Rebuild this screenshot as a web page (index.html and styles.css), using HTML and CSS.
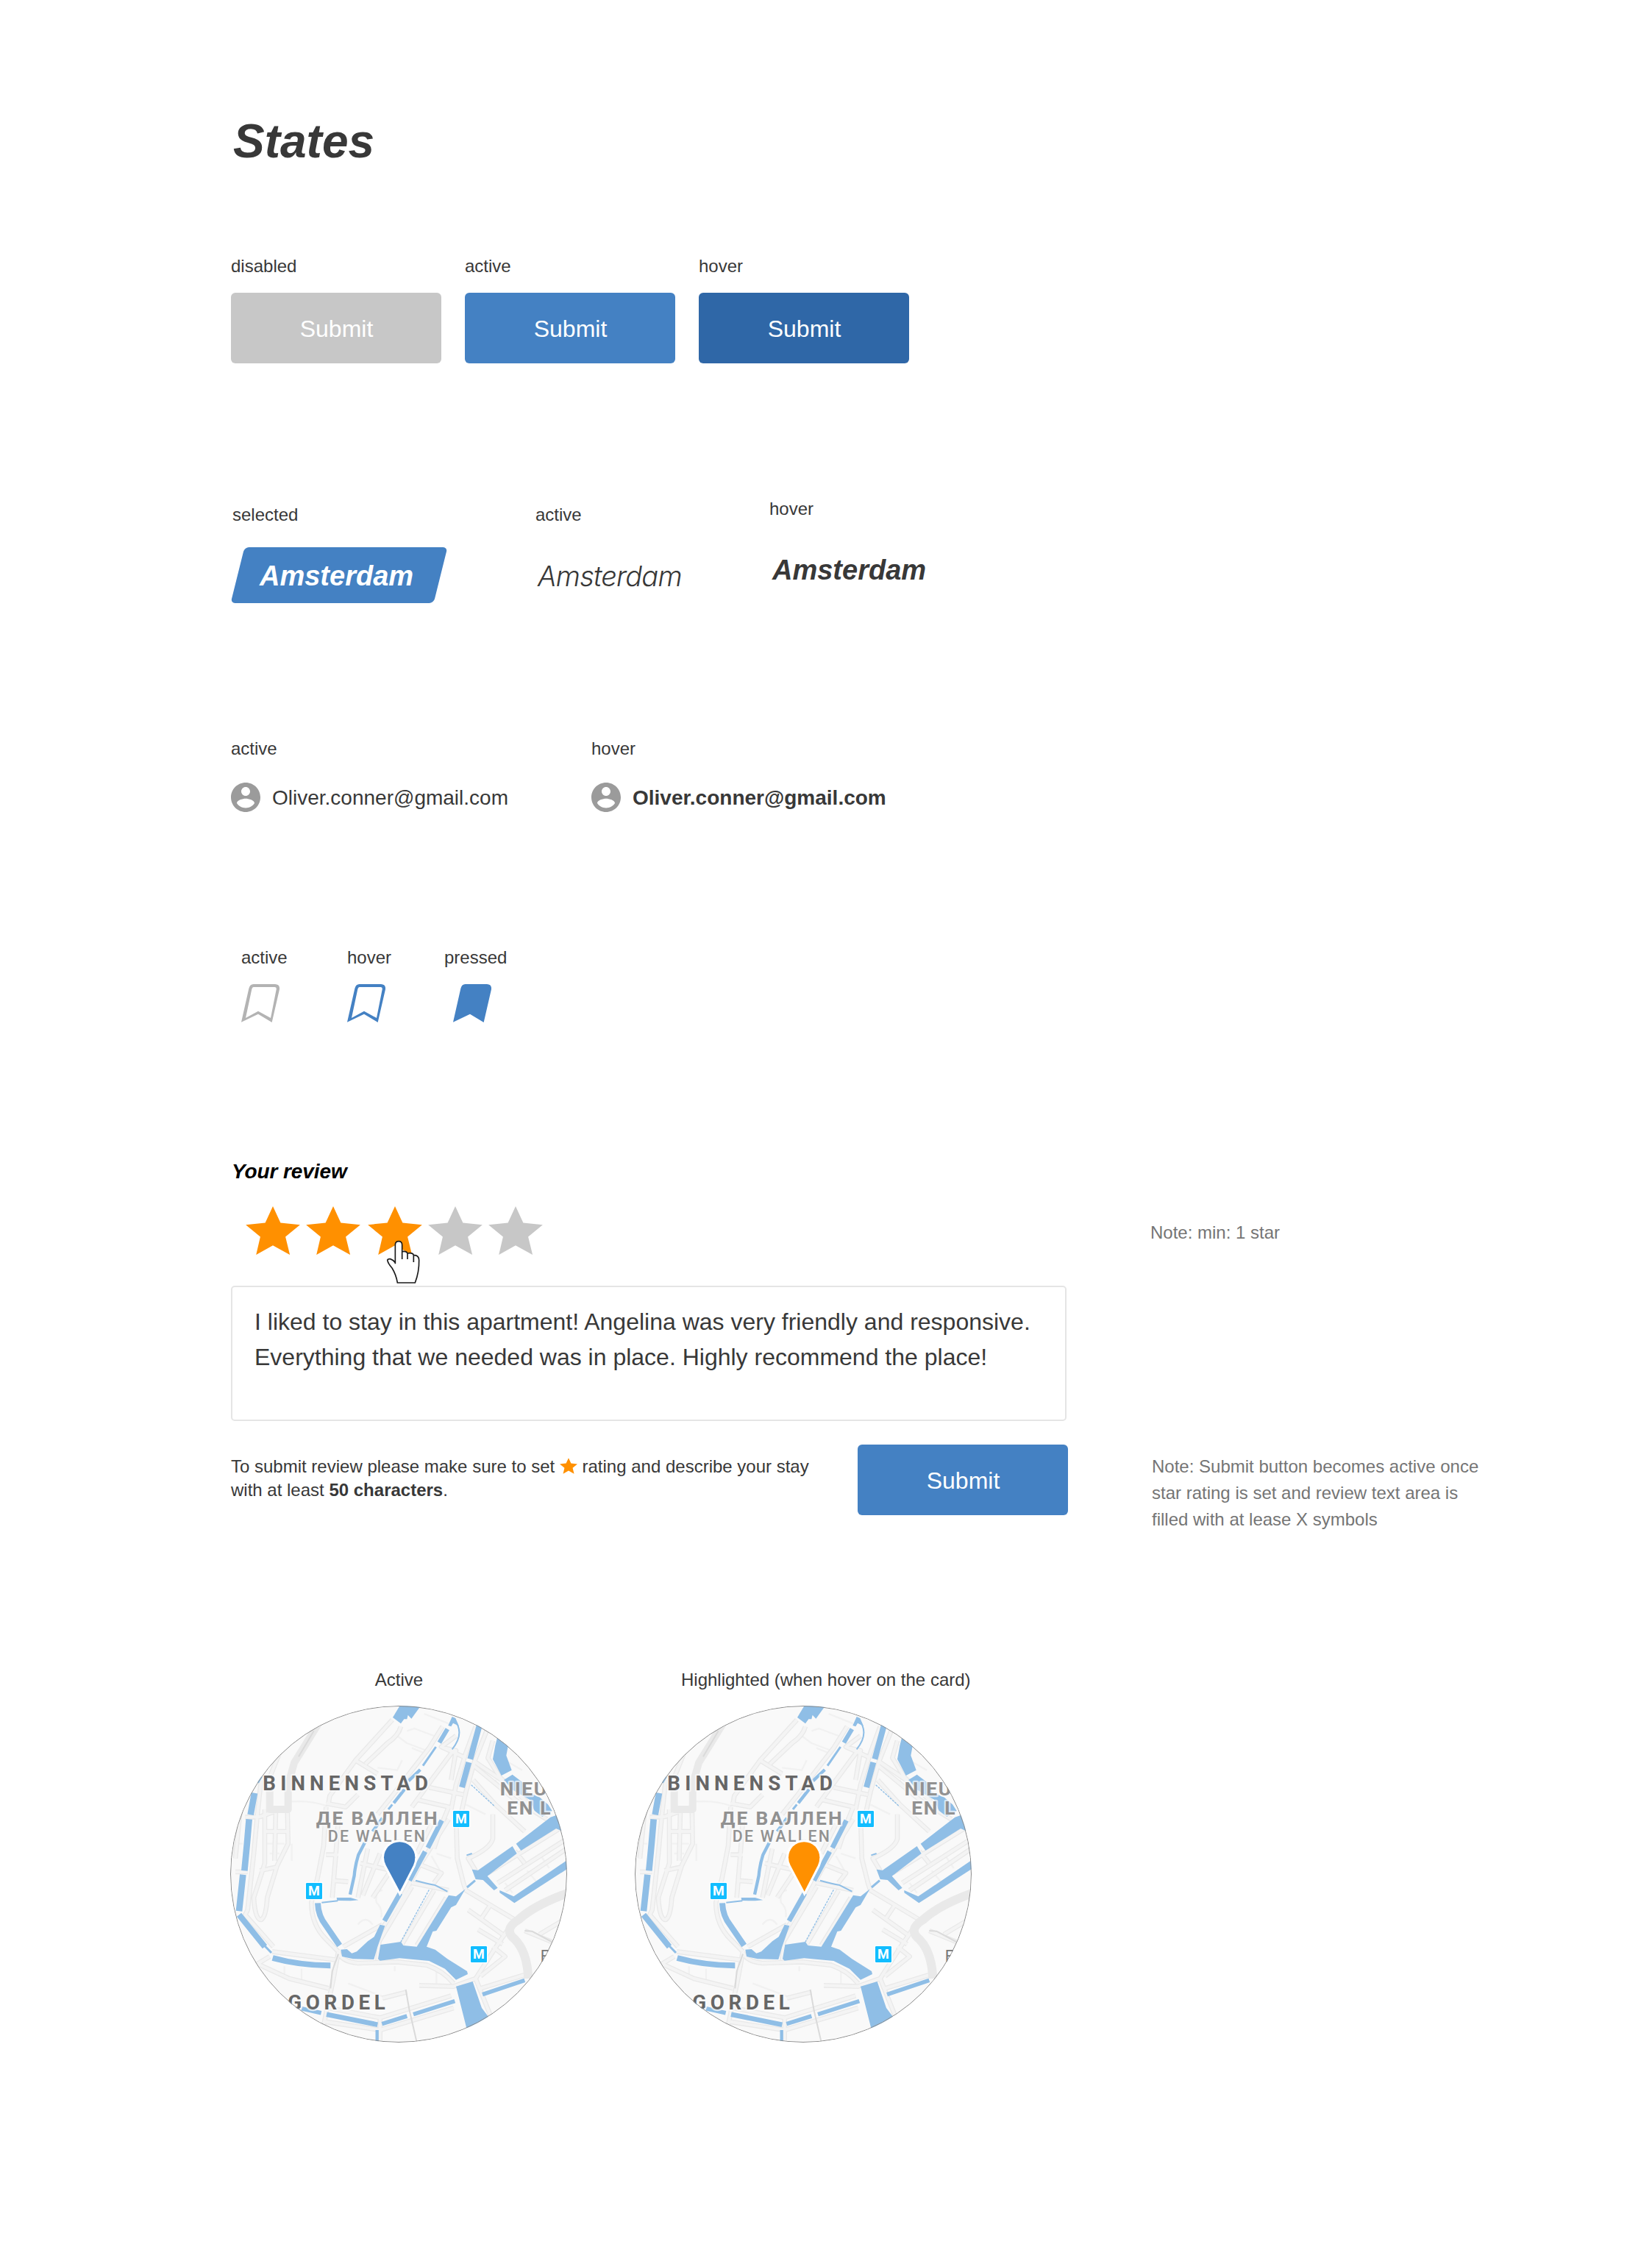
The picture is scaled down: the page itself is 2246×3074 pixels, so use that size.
FILE: index.html
```html
<!DOCTYPE html>
<html lang="en">
<head>
<meta charset="utf-8">
<title>States</title>
<link rel="stylesheet" href="styles.css">
</head>
<body>
<svg class="defs" aria-hidden="true">
  <defs>
    <symbol id="star" viewBox="0 0 220 197"><path d="M110 0L141 67L220 75L161 124L179 197L110 159L42 197L59 124L0 75L79 67Z"/></symbol>
    <symbol id="user" viewBox="2 2 20 20"><path d="M12 2C6.48 2 2 6.48 2 12s4.48 10 10 10 10-4.48 10-10S17.52 2 12 2zm0 3c1.66 0 3 1.34 3 3s-1.34 3-3 3-3-1.34-3-3 1.34-3 3-3zm0 14.2c-2.5 0-4.71-1.28-6-3.22.03-1.99 4-3.08 6-3.08 1.99 0 5.97 1.09 6 3.08-1.29 1.94-3.5 3.22-6 3.22z"/></symbol>
    <symbol id="bookmark" viewBox="0 0 156 156"><path fill-rule="evenodd" d="M0 155L31 18Q35 0 50 0H138Q158 1 156 21L125 156L69 122ZM18 138L43 20Q45 12 50 12H136Q145 12 143 22L120 138L69 110Z"/></symbol>
    <symbol id="bookmark-full" viewBox="0 0 156 156"><path d="M0 155L31 18Q35 0 50 0H138Q158 1 156 21L125 156L69 122Z"/></symbol>
    <g id="streets">
      <path d="M700 235L550 400L445 545L440 575M735 262Q725 300 680 330L590 415M550 400L640 455M905 262L850 350L780 440L700 545L640 620M960 300L900 345L1000 390M945 365L860 480L780 590M915 350L960 360L940 480M1040 262L1000 370L960 500L940 600M1085 280L1035 405L1000 530L980 620M1035 405L1160 490L1210 540M1110 320L1090 390L1140 470L1250 570M1030 420L1200 560L1330 640M1030 480L1120 580L1240 690"/>
      <path d="M430 575L510 590L560 540M430 590L420 750L395 880L370 980Q370 1070 430 1130L480 1180M480 640L470 780L455 960M430 785H480M455 890L520 895M650 780L580 950M700 840L620 960M600 760L560 960M800 560L930 590L910 640L870 760M850 510L990 540M930 640L810 830L740 960L650 1100L640 1215M860 660L800 780M780 900L930 930M740 1150L870 930M640 1150L780 915M800 1155L920 960M500 1160L660 1070M570 820L700 850M800 820L900 860L870 900"/>
      <path d="M960 620L965 800L990 900L1000 930L1200 1050M1110 620L1110 720Q1100 760 1010 800L1040 850M1090 860L1412 660M1130 900L1412 720M1160 930L1412 760M1200 770L1240 820M480 1180Q490 1220 560 1227L720 1222L840 1235Q910 1260 950 1310M480 1180L460 1290L420 1480M210 1180L480 1215M200 1200L150 1230L280 1290L440 1330M810 1318L950 1322L1040 1290L1130 1150L1200 1050M1040 1290L1100 1440M1060 1330L1240 1275M1110 1160L1160 1200L1060 1280"/>
      <path d="M660 1370L760 1345M650 1450L940 1360M440 1410L650 1450L650 1550M420 1465L650 1500L950 1410M165 480L150 620L135 780L110 1010L100 1030L215 1160M60 855L110 855M80 600L60 800M100 632L160 630L275 590M180 600L180 820L135 960Q140 1050 165 1050Q185 1040 190 960L230 830L275 740L270 480M180 690L270 690M160 850L230 835M225 600L220 810M240 370L200 470M1010 1010L1150 1110M1100 990L1060 1050M1240 1095L1350 1140M1300 1110L1400 1050M1050 1090L1150 1150"/>
    </g>
    <g id="map">
      <rect class="land" x="39" y="177" width="1374" height="1374"/>
      <path class="lane" d="M760 280L790 270L870 300M830 210L930 250M720 300L760 330L840 360M640 430L720 440L740 400M780 350L830 370M1000 580L1080 620M880 780L940 800M860 790L900 860M660 930Q630 930 635 980Q660 1000 655 1040M560 1070Q590 1030 620 1070M260 1240V1290M330 1250V1300M520 1310L680 1370M880 1250V1310M710 1240V1260M1160 900L1190 940M1250 850L1300 910M1300 780L1340 840M1120 480L1150 540M1160 400L1230 440M270 570Q360 560 430 585L430 620M60 740H90M290 740L290 810M190 740H260M200 780H240"/>
      <use class="street-edge" href="#streets"/>
      <use class="street-fill" href="#streets"/>
      <path class="road" d="M408 235Q350 330 300 410L275 500V600L200 600V520"/>
      <path class="road road-wide" d="M1420 940Q1280 990 1215 1050Q1150 1090 1200 1130Q1250 1180 1255 1290"/>
      <path class="track" d="M380 280L318 385M755 1335L770 1420L800 1550M480 1190L455 1260L448 1330M1240 1095L1270 1097L1350 1140"/>
      <g class="water">
        <path d="M735 170L816 178L778 230L764 215L760 232L748 232L735 250L702 225ZM944 222L958 228L972 260L948 248L940 262L928 258Z"/>
        <path d="M1128 308L1172 343L1165 380L1187 440L1145 462L1110 395L1120 340ZM1155 480L1190 458L1245 500L1250 530L1300 550L1335 580L1352 606L1312 630L1280 605L1260 560L1190 520Z"/>
        <path d="M1205 740L1345 632L1375 622L1395 690L1368 678L1225 768ZM1025 845L1050 848L1190 750L1208 780L1088 872L1130 920L1115 930L1070 888L1040 885ZM1138 930L1195 955L1415 806V842L1198 982L1138 940Z"/>
        <path d="M650 1070L670 1075L640 1160L625 1212L540 1210L495 1200L490 1172L515 1170L535 1187L555 1180L600 1138L626 1120ZM473 960L530 960L562 970L530 973L475 972Z"/>
        <path d="M652 1152L735 1140L745 1155L800 1160L930 950L960 955L998 925L960 990L940 1000L880 1095L865 1098L840 1160L875 1172L925 1210L1005 1260L1008 1272L960 1295L915 1250L850 1218L730 1207L650 1217L642 1210Z"/>
        <path d="M960 1322L1028 1302L1065 1410L1095 1450L1010 1520Z"/>
      </g>
      <g class="canal">
        <path stroke-width="6" d="M952 232Q998 290 944 355M1003 787L1025 780M412 980L478 973M795 890Q850 905 872 908L925 935"/>
        <path stroke-width="18" d="M925 272L892 328"/>
        <path stroke-width="9" d="M878 345L825 422M700 580L684 600M1038 890L1005 918M175 1152L207 1185"/>
        <path stroke-width="13" d="M814 438L766 484M750 518L706 574M660 635L620 690M588 735L562 785Q548 830 545 870L528 947M638 1500V1555M165 465L150 490"/>
        <path stroke-width="24" d="M1056 255L1018 395M1012 408L984 510M396 982Q398 1035 430 1075L485 1155M212 1206Q320 1236 448 1237M75 1030L180 1160"/>
        <path stroke-width="20" d="M902 645L845 757M834 772L770 890M732 942L668 1055M432 1436L640 1478"/>
        <path stroke-width="17" d="M1068 1355L1240 1297M786 1436L955 1382M658 1475L760 1443M330 1412L410 1430"/>
        <path stroke-width="26" d="M91 866L75 1015M116 640Q108 740 97 850M138 533L122 622"/>
        <path class="dashed" stroke-width="4" d="M850 928L735 1140M1022 500L1115 585"/>
      </g>
    </g>
    <g id="metro">
      <rect x="-4" y="-4" width="74" height="74" rx="6" fill="#fff"/>
      <rect width="66" height="66" rx="4" fill="#12bdff"/>
    </g>
    <path id="pin" d="M731 935L674 828Q666 812 666 796A63.500 63.500 0 0 1 793 796Q793 812 786 828Z"/>
  </defs>
</svg>

<main class="page">
  <h1 class="title">States</h1>

  <section class="row buttons">
    <div class="state"><p class="label">disabled</p><button class="btn btn-disabled">Submit</button></div>
    <div class="state"><p class="label">active</p><button class="btn">Submit</button></div>
    <div class="state"><p class="label">hover</p><button class="btn btn-hover">Submit</button></div>
  </section>

  <section class="row tabs">
    <div class="state state-selected"><p class="label">selected</p><span class="tab tab-selected">Amsterdam</span></div>
    <div class="state state-link"><p class="label">active</p><span class="tab tab-light">Amsterdam</span></div>
    <div class="state state-hover"><p class="label">hover</p><span class="tab">Amsterdam</span></div>
  </section>

  <section class="row users">
    <div class="state"><p class="label">active</p><div class="user"><svg class="avatar"><use href="#user"/></svg><span>Oliver.conner@gmail.com</span></div></div>
    <div class="state"><p class="label">hover</p><div class="user user-hover"><svg class="avatar"><use href="#user"/></svg><span>Oliver.conner@gmail.com</span></div></div>
  </section>

  <section class="row bookmarks">
    <div class="state"><p class="label">active</p><svg class="bookmark"><use href="#bookmark"/></svg></div>
    <div class="state"><p class="label">hover</p><svg class="bookmark bookmark-blue"><use href="#bookmark"/></svg></div>
    <div class="state state-pressed"><p class="label">pressed</p><svg class="bookmark bookmark-blue"><use href="#bookmark-full"/></svg></div>
  </section>

  <section class="review">
    <h2 class="review-title">Your review</h2>
    <div class="stars">
      <svg class="star"><use href="#star"/></svg>
      <svg class="star"><use href="#star"/></svg>
      <span class="star-hover">
        <svg class="star"><use href="#star"/></svg>
        <svg class="cursor" viewBox="675 378 140 178"><path d="M712 475V398Q712 383 726 383Q740 383 740 398V425Q758 421 762 432Q783 428 787 439Q809 439 809 460Q810 508 793 552H721Q716 520 699 492Q682 474 680 459Q682 454 692 455Q704 459 712 470M740 420V456M762 430V456M787 437V468"/></svg>
      </span>
      <svg class="star star-off"><use href="#star"/></svg>
      <svg class="star star-off"><use href="#star"/></svg>
    </div>
    <p class="note note-stars">Note: min: 1 star</p>
    <div class="textarea">I liked to stay in this apartment! Angelina was very friendly and responsive.<br>Everything that we needed was in place. Highly recommend the place!</div>
    <div class="review-foot">
      <p class="help">To submit review please make sure to set <svg class="star-inline"><use href="#star"/></svg> rating and describe your stay<br>with at least <b>50 characters</b>.</p>
      <button class="btn">Submit</button>
    </div>
    <p class="note note-submit">Note: Submit button becomes active once<br>star rating is set and review text area is<br>filled with at lease X symbols</p>
  </section>

  <section class="row maps">
    <figure class="map-state">
      <figcaption class="label">Active</figcaption>
      <svg class="map" viewBox="39 177 1374 1374">
        <use href="#map"/>
        <g class="place">
          <text class="district" x="172" y="521" textLength="674">BINNENSTAD</text>
          <text class="district" x="274" y="1415" textLength="397">GORDEL</text>
          <text class="area" x="389" y="664" textLength="500">ДЕ ВАЛЛЕН</text>
          <text class="area area-small" x="437" y="731" textLength="402">DE WALLEN</text>
          <text class="area" x="1139" y="543">NIEU</text>
          <text class="area" x="1168" y="622">EN L</text>
          <text class="area area-small area-thin" x="1304" y="1222">F</text>
        </g>
        <g class="metro" transform="translate(948 606)"><use href="#metro"/><text x="33" y="51">M</text></g>
        <g class="metro" transform="translate(348 900)"><use href="#metro"/><text x="33" y="51">M</text></g>
        <g class="metro" transform="translate(1020 1158)"><use href="#metro"/><text x="33" y="51">M</text></g>
        <use class="pin" href="#pin"/>
        <circle class="ring" cx="726" cy="864" r="685.500"/>
      </svg>
    </figure>
    <figure class="map-state">
      <figcaption class="label label-long">Highlighted (when hover on the card)</figcaption>
      <svg class="map" viewBox="39 177 1374 1374">
        <use href="#map"/>
        <g class="place">
          <text class="district" x="172" y="521" textLength="674">BINNENSTAD</text>
          <text class="district" x="274" y="1415" textLength="397">GORDEL</text>
          <text class="area" x="389" y="664" textLength="500">ДЕ ВАЛЛЕН</text>
          <text class="area area-small" x="437" y="731" textLength="402">DE WALLEN</text>
          <text class="area" x="1139" y="543">NIEU</text>
          <text class="area" x="1168" y="622">EN L</text>
          <text class="area area-small area-thin" x="1304" y="1222">F</text>
        </g>
        <g class="metro" transform="translate(948 606)"><use href="#metro"/><text x="33" y="51">M</text></g>
        <g class="metro" transform="translate(348 900)"><use href="#metro"/><text x="33" y="51">M</text></g>
        <g class="metro" transform="translate(1020 1158)"><use href="#metro"/><text x="33" y="51">M</text></g>
        <use class="pin pin-on" href="#pin"/>
        <circle class="ring" cx="726" cy="864" r="685.500"/>
      </svg>
    </figure>
  </section>
</main>
</body>
</html>
```
FILE: styles.css
```css
* { box-sizing: border-box; }
body { margin: 0; background: #fff; color: #383838; font-family: "Liberation Sans", Arial, sans-serif; }
h1, h2, p, figure { margin: 0; }
svg { display: block; }
.defs { position: absolute; width: 0; height: 0; }

.page { min-height: 3074px; padding: 156px 0 0 314px; }
.title { padding-left: 3px; font-size: 64px; line-height: 72px; font-style: italic; font-weight: 700; }
.row { display: flex; align-items: flex-start; }
.label { font-size: 24px; line-height: 28px; white-space: nowrap; }

/* buttons */
.buttons { margin-top: 120px; gap: 32px; }
.btn { display: block; width: 286px; height: 96px; margin: 0; padding: 2px 0 0 1px; border: 0; border-radius: 6px; background: #4481c3; color: #fff; font: 32px/94px "Liberation Sans", Arial, sans-serif; text-align: center; }
.buttons .btn { margin-top: 22px; }
.btn-disabled { background: #c7c7c7; }
.btn-hover { background: #2f67a7; }

/* city tabs */
.tabs { margin-top: 184px; }
.state-selected, .state-link { padding-top: 8px; }
.state-selected { width: 414px; }
.state-selected .label { padding-left: 2px; }
.state-link { width: 318px; }
.tab { display: block; position: relative; z-index: 0; margin-top: 30px; padding-top: 1px; padding-left: 4px; height: 76px; font-size: 38px; line-height: 76px; font-style: italic; font-weight: 700; }
.tab-selected { width: 294px; padding-left: 39px; color: #fff; }
.tab-selected::before { content: ""; position: absolute; z-index: -1; inset: 0 9px; border-radius: 6px; background: #4481c3; transform: skewX(-14deg); }
.tab-light { padding-left: 3px; font-family: Inter, "Liberation Sans", sans-serif; font-weight: 300; letter-spacing: -.8px; }

/* account link */
.users { margin-top: 184px; }
.users .state { width: 490px; }
.user { display: flex; align-items: center; gap: 16px; height: 40px; margin-top: 32px; font-size: 28px; line-height: 38px; }
.user span { padding-top: 2px; }
.user-hover { font-weight: 700; }
.avatar { width: 40px; height: 40px; fill: #9b9b9b; }

/* bookmarks */
.bookmarks { margin-top: 184px; padding-left: 14px; }
.bookmarks .state { width: 144px; }
.bookmark { width: 52px; height: 52px; margin-top: 22px; fill: #b3b3b3; }
.bookmark-blue { fill: #4481c3; }
.state-pressed .label { margin-left: -12px; }

/* review form */
.review { display: grid; grid-template-columns: 1138px 474px; column-gap: 112px; margin-top: 187px; }
.review-title { grid-column: 1 / -1; padding-left: 1px; color: #000; font-size: 28px; line-height: 32px; font-style: italic; font-weight: 700; letter-spacing: -.1px; }
.stars { display: flex; gap: 8px; height: 66px; margin: 31px 0 42px; padding-left: 20px; }
.star { flex: none; width: 74px; height: 66px; fill: #ff9000; }
.star-off { fill: #c7c7c7; }
.star-hover { position: relative; margin-left: 2px; }
.cursor { position: absolute; left: 25px; top: 46px; width: 46.700px; height: 59.300px; fill: #fff; stroke: #1a1a1a; stroke-width: 5; }
.note { color: #757575; font-size: 24px; line-height: 36px; }
.note-stars { margin-top: 49px; }
.textarea { grid-column: 1; width: 1136px; height: 184px; padding: 23px 30px; border: 2px solid #e5e5e5; border-radius: 5px; font-size: 32px; line-height: 48px; white-space: nowrap; }
.review-foot { grid-column: 1; display: flex; justify-content: space-between; margin-top: 32px; }
.help { padding-top: 14px; font-size: 24px; line-height: 32px; white-space: nowrap; }
.star-inline { display: inline-block; width: 24px; height: 22px; vertical-align: -2px; fill: #ff9000; }
.note-submit { margin: 44px 0 0 2px; white-space: nowrap; }

/* maps */
.maps { margin-top: 186px; margin-left: -1px; gap: 92px; }
.map-state { width: 458px; }
.map-state .label { padding-left: 1px; text-align: center; }
.map-state .label-long { padding-left: 63px; text-align: left; }
.map { width: 458px; height: 458px; margin-top: 21px; border-radius: 50%; overflow: hidden; }
.land { fill: #f9f9f9; }
.lane, .street-edge, .street-fill, .road, .track, .canal { fill: none; stroke-linejoin: round; }
.lane { stroke: #f1f1f1; stroke-width: 7; }
.street-edge { stroke: #e9e9e9; stroke-width: 20; }
.street-fill { stroke: #f4f4f4; stroke-width: 12; }
.road { stroke: #e9e9e9; stroke-width: 30; }
.road-wide { stroke-width: 36; }
.track { stroke: #dadada; stroke-width: 6; }
.water { fill: #8fbee6; }
.canal { stroke: #8fbee6; }
.dashed { stroke-dasharray: 9 4; }
.place text { font-family: Roboto, sans-serif; stroke: #f9f9f9; stroke-opacity: .7; stroke-width: 14; stroke-linejoin: round; paint-order: stroke; }
.place .district { fill: #666; font-size: 83px; font-weight: 700; }
.place .area { fill: #919191; font-size: 79px; font-weight: 700; letter-spacing: 5px; }
.place .area-small { font-size: 64px; font-weight: 500; }
.place .area-thin { font-weight: 400; fill: #777; }
.metro text { fill: #fff; font: 700 54px Roboto, sans-serif; text-anchor: middle; }
.pin { fill: #4481c3; stroke: #fff; stroke-width: 18; paint-order: stroke; }
.pin-on { fill: #ff9000; }
.ring { fill: none; stroke: #8c8c8c; stroke-width: 3; }
```
